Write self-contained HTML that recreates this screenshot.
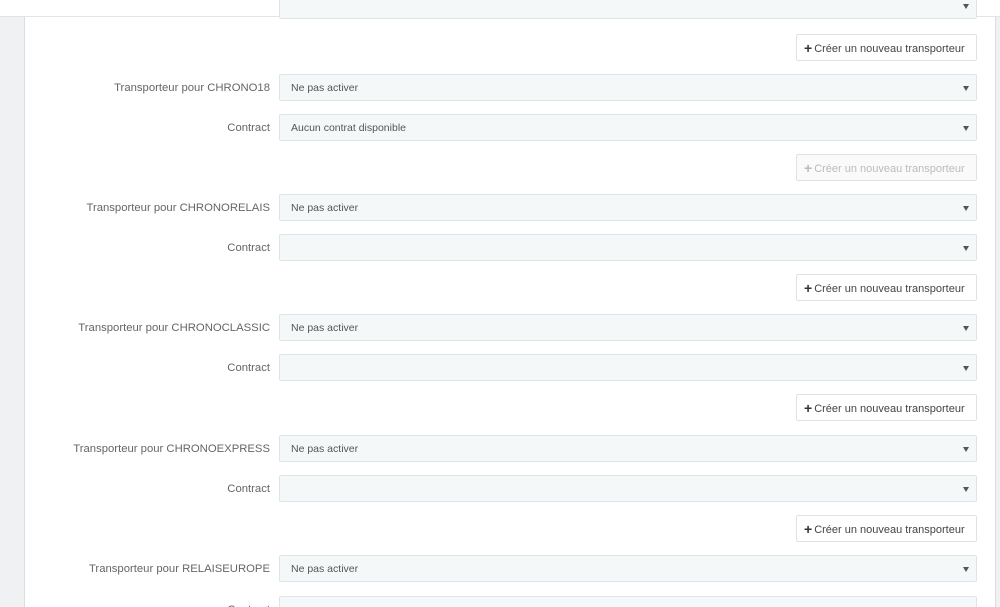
<!DOCTYPE html>
<html><head><meta charset="utf-8"><style>
*{box-sizing:border-box;margin:0;padding:0}
html,body{width:1000px;height:607px;overflow:hidden}
body{background:#eff1f2;font-family:"Liberation Sans",sans-serif;position:relative}
.top{position:absolute;left:0;top:0;width:1000px;height:17px;background:#fff;border-bottom:1px solid #e2e5e7}
.panel{position:absolute;left:24px;top:17px;width:972px;height:590px;background:#fff;border-left:1px solid #dcdfe1;border-right:1px solid #dcdfe1}
.sel{position:absolute;left:279px;width:698px;height:27px;background:#f5f8f9;border:1px solid #dde5e8;border-radius:2px;font-size:10.5px;color:#555;line-height:27px;padding-left:11px}
.sel:after{content:"";position:absolute;right:7px;top:11px;border-left:3px solid transparent;border-right:3px solid transparent;border-top:5px solid #555}
.lbl{position:absolute;right:730px;font-size:11.3px;color:#666;line-height:29px;white-space:nowrap}
.btn{position:absolute;left:796px;width:181px;height:27px;background:#fff;border:1px solid #dfe3e5;border-radius:2px;font-size:11px;color:#444;line-height:26px;padding-left:7px;white-space:nowrap}
.btn b{font-size:14px;font-weight:bold;color:#333;vertical-align:-1px;margin-right:2px}
.dis{color:#bbb;background:#fafafa}.dis b{color:#bbb}
</style></head><body>
<div class="top"></div>
<div class="panel"></div>
<div class="sel" style="top:-8px"></div>
<div class="btn" style="top:34px"><b>+</b>Créer un nouveau transporteur</div>

<div class="lbl" style="top:74px">Transporteur pour CHRONO18</div>
<div class="sel" style="top:74px">Ne pas activer</div>
<div class="lbl" style="top:114px">Contract</div>
<div class="sel" style="top:114px">Aucun contrat disponible</div>
<div class="btn dis" style="top:154px"><b>+</b>Créer un nouveau transporteur</div>

<div class="lbl" style="top:194px">Transporteur pour CHRONORELAIS</div>
<div class="sel" style="top:194px">Ne pas activer</div>
<div class="lbl" style="top:234px">Contract</div>
<div class="sel" style="top:234px"></div>
<div class="btn" style="top:274px"><b>+</b>Créer un nouveau transporteur</div>

<div class="lbl" style="top:314px">Transporteur pour CHRONOCLASSIC</div>
<div class="sel" style="top:314px">Ne pas activer</div>
<div class="lbl" style="top:354px">Contract</div>
<div class="sel" style="top:354px"></div>
<div class="btn" style="top:394px"><b>+</b>Créer un nouveau transporteur</div>

<div class="lbl" style="top:435px">Transporteur pour CHRONOEXPRESS</div>
<div class="sel" style="top:435px">Ne pas activer</div>
<div class="lbl" style="top:475px">Contract</div>
<div class="sel" style="top:475px"></div>
<div class="btn" style="top:515px"><b>+</b>Créer un nouveau transporteur</div>

<div class="lbl" style="top:555px">Transporteur pour RELAISEUROPE</div>
<div class="sel" style="top:555px">Ne pas activer</div>
<div class="lbl" style="top:596px">Contract</div>
<div class="sel" style="top:596px"></div>
</body></html>
